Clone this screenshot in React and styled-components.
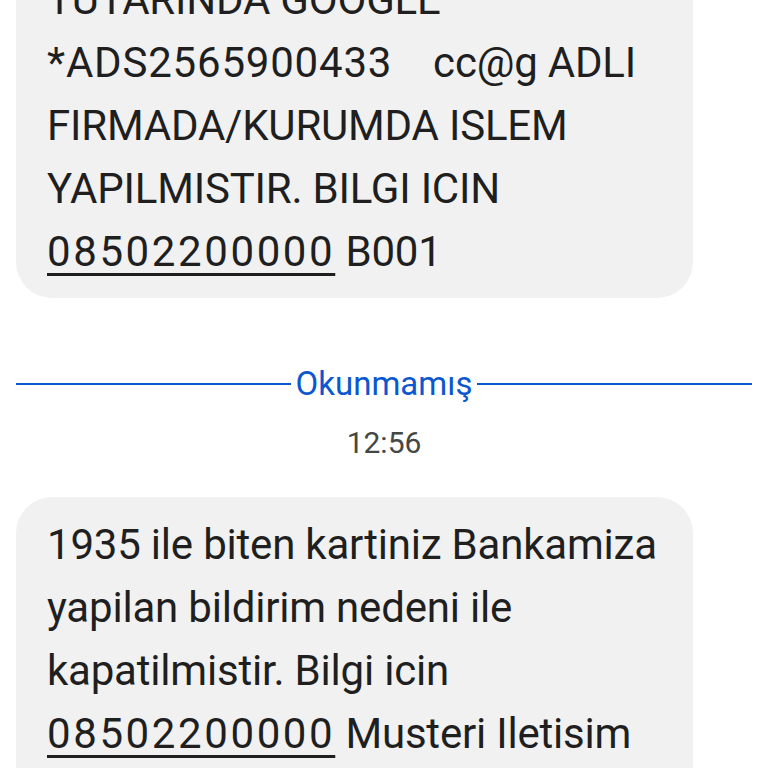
import styled, { createGlobalStyle } from 'styled-components'

const GlobalStyle = createGlobalStyle`
  html, body {
    margin: 0;
    padding: 0;
    background: #ffffff;
    overflow: hidden;
  }
  body {
    font-family: Roboto, "Noto Sans", "Liberation Sans", sans-serif;
  }
`

const Thread = styled.div`
  width: 768px;
  height: 768px;
  overflow: hidden;
  box-sizing: border-box;
  padding: 0 16px;
  display: flex;
  flex-direction: column;
`

const Bubble = styled.div`
  box-sizing: border-box;
  width: 677px;
  flex: 0 0 auto;
  padding: 16px 20px ${p => p.$tail || 15}px 31px;
  margin-top: ${p => p.$offset || 0}px;
  background: #f1f1f1;
  border-radius: 36px;
  color: #1f1f1f;
  font-size: 42px;
  line-height: 63px;
  letter-spacing: -0.2px;
  white-space: pre;
`

const Code = styled.span`
  letter-spacing: 0.8px;
`

const Phone = styled.span`
  letter-spacing: 2.6px;
  text-decoration: underline;
  text-decoration-thickness: 3px;
  text-underline-offset: 7px;
`

const Divider = styled.div`
  display: flex;
  align-items: center;
  gap: 5px;
  margin-top: 66px;
  height: 40px;
  color: #0b57d0;
  font-size: 33px;
  &::before, &::after {
    content: '';
    flex: 1;
    height: 2px;
    background: #0b57d0;
  }
`

const Time = styled.div`
  margin-top: 20px;
  text-align: center;
  font-size: 30px;
  line-height: 40px;
  color: #444746;
`

export default function App() {
  return (
    <>
      <GlobalStyle />
      <Thread>
        <Bubble $offset={-48}>
          {'TUTARINDA GOOGLE\n'}
          <Code>*ADS2565900433</Code>
          {'    cc@g ADLI\nFIRMADA/KURUMDA ISLEM\nYAPILMISTIR. BILGI ICIN\n'}
          <Phone>08502200000</Phone>
          {' B001'}
        </Bubble>
        <Divider>Okunmamış</Divider>
        <Time>12:56</Time>
        <Bubble $offset={34} $tail={60}>
          {'1935 ile biten kartiniz Bankamiza\nyapilan bildirim nedeni ile\nkapatilmistir. Bilgi icin\n'}
          <Phone>08502200000</Phone>
          {' Musteri Iletisim'}
        </Bubble>
      </Thread>
    </>
  )
}
